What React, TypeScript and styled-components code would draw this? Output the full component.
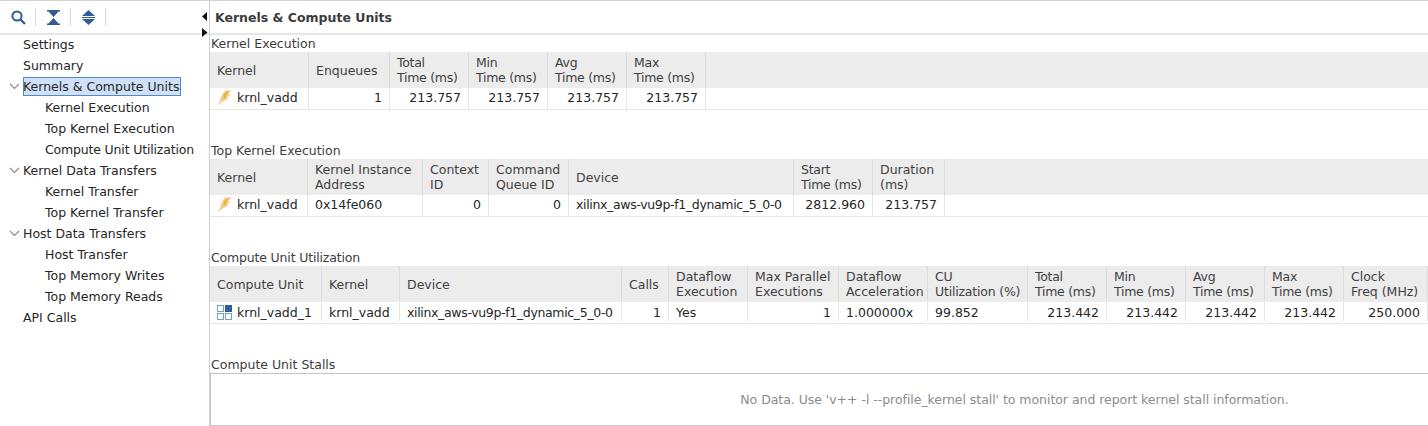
import React from 'react';
import styled, { createGlobalStyle } from 'styled-components';

const GlobalStyles = createGlobalStyle`
  html, body { margin: 0; padding: 0; background: #fff; }
  body { font-family: "DejaVu Sans", sans-serif; font-size: 12.5px; color: #262626; }
`;

const Wrapper = styled.div`
  width: 1428px;
  height: 426px;
  display: flex;
  overflow: hidden;
  background: #fff;
`;

const Sidebar = styled.aside`
  width: 210px;
  box-sizing: border-box;
  flex: none;
  border-right: 1px solid #cfcfcf;
`;

const Toolbar = styled.div`
  height: 35px;
  margin-bottom: -1px;
  padding-left: 1px;
  box-sizing: border-box;
  display: flex;
  align-items: center;
  border-top: 1px solid #d4d4d4;
  border-bottom: 2px solid #e6e6e6;
`;

const ToolButton = styled.div`
  width: 35px;
  height: 18px;
  box-sizing: border-box;
  flex: none;
  display: flex;
  align-items: center;
  justify-content: center;
  border-right: 1px solid #d8d8d8;
  svg { display: block; }
`;

const TreeRow = styled.div<{ $level: number }>`
  height: 21px;
  display: flex;
  align-items: center;
  padding-left: ${p => (p.$level === 1 ? 45 : 23)}px;
  position: relative;
  white-space: nowrap;
`;

const Chevron = styled.svg`
  position: absolute;
  left: 9px;
  top: 7px;
`;

const TreeLabel = styled.span<{ $selected?: boolean; $spacing?: number }>`
  line-height: 19px;
  height: 19px;
  letter-spacing: ${p => p.$spacing ?? 0}px;
  ${p => (p.$selected
    ? 'background: #cfe0f8; outline: 1px solid #4d8cc7; outline-offset: -1px; padding-right: 2px;'
    : '')}
`;

const Main = styled.main`
  flex: 1;
  min-width: 0;
  display: flex;
  flex-direction: column;
  position: relative;
`;

const Header = styled.header`
  height: 35px;
  flex: none;
  box-sizing: border-box;
  display: flex;
  align-items: center;
  padding-left: 5px;
  font-weight: bold;
  color: #3c3c3c;
  border-top: 1px solid #d4d4d4;
  border-bottom: 2px solid #e6e6e6;
`;

const Arrows = styled.svg`
  position: absolute;
  left: -8px;
  top: 12px;
`;

const Section = styled.section`
  height: 107px;
  flex: none;
`;

const SectionTitle = styled.div<{ $spacing?: number }>`
  height: 17px;
  line-height: 18px;
  padding-left: 1px;
  color: #3c3c3c;
  letter-spacing: ${p => p.$spacing ?? 0}px;
`;

const TableRow = styled.div<{ $cols: string; $head?: boolean }>`
  display: grid;
  grid-template-columns: ${p => p.$cols};
  height: ${p => (p.$head ? 36 : 22)}px;
  box-sizing: border-box;
  background: ${p => (p.$head ? '#ececec' : '#fff')};
  ${p => (p.$head ? '' : 'border-bottom: 1px solid #e6e6e6;')}
`;

const HeadCell = styled.div<{ $low?: boolean; $spacing?: number }>`
  box-sizing: border-box;
  display: flex;
  align-items: center;
  padding: ${p => (p.$low ? 2 : 0)}px 0 0 7px;
  line-height: 15px;
  color: #3f3f3f;
  border-right: 1px solid #dcdcdc;
  white-space: pre;
  overflow: hidden;
  letter-spacing: ${p => p.$spacing ?? 0}px;
`;

const Cell = styled.div<{ $num?: boolean; $spacing?: number; $low?: boolean }>`
  box-sizing: border-box;
  display: flex;
  align-items: center;
  justify-content: ${p => (p.$num ? 'flex-end' : 'flex-start')};
  padding: ${p => (p.$low ? '2px 7px 0' : '0 7px 2px')};
  gap: 5px;
  border-right: 1px solid #e6e6e6;
  white-space: nowrap;
  letter-spacing: ${p => p.$spacing ?? 0}px;
`;

const IconSlot = styled.span`
  display: flex;
  flex: none;
`;

const Filler = styled.div``;

const EmptyBox = styled.div`
  height: 53px;
  box-sizing: border-box;
  display: flex;
  align-items: center;
  justify-content: center;
  padding-left: 390px;
  color: #8c8c8c;
  letter-spacing: -0.04px;
  border: 1px solid #c4c4c4;
  border-right: none;
`;

const Bolt = () => (
  <svg width="15" height="15" viewBox="0 0 15 15">
    <path d="M8 1 L14 0.5 L10.5 4.5 L13 4.5 L9.5 8 L11 8 L1 14.5 L4.5 9 L3 9 L5.5 5.5 L5 5 Z" fill="#f5cd7c" stroke="#e4d6b4" strokeWidth="0.7" />
    <path d="M9 2 L12 1.5 L8 6.5 L10 6.5 L6 9.5 L7 7.5 L6.5 5 Z" fill="#f0ab3a" />
  </svg>
);

const UnitIcon = () => (
  <svg width="15" height="15" viewBox="0 0 15 15">
    <rect x="0.5" y="0.5" width="6" height="6" fill="none" stroke="#6f9fd0" />
    <rect x="8" y="0" width="7" height="7" fill="#2f5f96" />
    <rect x="0.5" y="8.5" width="6" height="6" fill="none" stroke="#6f9fd0" />
    <rect x="8.5" y="8.5" width="6" height="6" fill="none" stroke="#6f9fd0" />
  </svg>
);

const navy = '#2f5d94';

const tree: { label: string; level: number; open?: boolean; selected?: boolean; spacing?: number }[] = [
  { label: 'Settings', level: 0 },
  { label: 'Summary', level: 0 },
  { label: 'Kernels & Compute Units', level: 0, open: true, selected: true },
  { label: 'Kernel Execution', level: 1 },
  { label: 'Top Kernel Execution', level: 1 },
  { label: 'Compute Unit Utilization', level: 1, spacing: -0.17 },
  { label: 'Kernel Data Transfers', level: 0, open: true },
  { label: 'Kernel Transfer', level: 1 },
  { label: 'Top Kernel Transfer', level: 1 },
  { label: 'Host Data Transfers', level: 0, open: true },
  { label: 'Host Transfer', level: 1 },
  { label: 'Top Memory Writes', level: 1 },
  { label: 'Top Memory Reads', level: 1 },
  { label: 'API Calls', level: 0 },
];

type Col = { head: string; value: string; num?: boolean; icon?: React.ReactNode; spacing?: number; headSpacing?: number };

const deviceName = 'xilinx_aws-vu9p-f1_dynamic_5_0-0';
const timeSpacing = -0.28;

const tables: { title: string; spacing?: number; low?: boolean; cols: string; columns: Col[] }[] = [
  {
    title: 'Kernel Execution',
    cols: '99px 81px 79px 79px 79px 79px 1fr',
    columns: [
      { head: 'Kernel', value: 'krnl_vadd', icon: <Bolt /> },
      { head: 'Enqueues', value: '1', num: true },
      { head: 'Total\nTime (ms)', value: '213.757', num: true, headSpacing: timeSpacing },
      { head: 'Min\nTime (ms)', value: '213.757', num: true, headSpacing: timeSpacing },
      { head: 'Avg\nTime (ms)', value: '213.757', num: true, headSpacing: timeSpacing },
      { head: 'Max\nTime (ms)', value: '213.757', num: true, headSpacing: timeSpacing },
    ],
  },
  {
    title: 'Top Kernel Execution',
    cols: '98px 115px 66px 80px 225px 79px 72px 1fr',
    columns: [
      { head: 'Kernel', value: 'krnl_vadd', icon: <Bolt /> },
      { head: 'Kernel Instance\nAddress', value: '0x14fe060' },
      { head: 'Context\nID', value: '0', num: true },
      { head: 'Command\nQueue ID', value: '0', num: true },
      { head: 'Device', value: deviceName, spacing: -0.34 },
      { head: 'Start\nTime (ms)', value: '2812.960', num: true, headSpacing: timeSpacing },
      { head: 'Duration\n(ms)', value: '213.757', num: true },
    ],
  },
  {
    title: 'Compute Unit Utilization',
    spacing: -0.17,
    low: true,
    cols: '112px 78px 222px 47px 79px 91px 89px 100px 79px 79px 79px 79px 1fr',
    columns: [
      { head: 'Compute Unit', value: 'krnl_vadd_1', icon: <UnitIcon /> },
      { head: 'Kernel', value: 'krnl_vadd' },
      { head: 'Device', value: deviceName, spacing: -0.34 },
      { head: 'Calls', value: '1', num: true },
      { head: 'Dataflow\nExecution', value: 'Yes' },
      { head: 'Max Parallel\nExecutions', value: '1', num: true },
      { head: 'Dataflow\nAcceleration', value: '1.000000x' },
      { head: 'CU\nUtilization (%)', value: '99.852', headSpacing: -0.2 },
      { head: 'Total\nTime (ms)', value: '213.442', num: true, headSpacing: timeSpacing },
      { head: 'Min\nTime (ms)', value: '213.442', num: true, headSpacing: timeSpacing },
      { head: 'Avg\nTime (ms)', value: '213.442', num: true, headSpacing: timeSpacing },
      { head: 'Max\nTime (ms)', value: '213.442', num: true, headSpacing: timeSpacing },
      { head: 'Clock\nFreq (MHz)', value: '250.000', num: true },
    ],
  },
];

export default function App() {
  return (
    <Wrapper>
      <GlobalStyles />
      <Sidebar>
        <Toolbar>
          <ToolButton>
            <svg width="15" height="15" viewBox="0 0 15 15">
              <circle cx="6" cy="6" r="4.6" fill="none" stroke={navy} strokeWidth="2" />
              <path d="M9.5 9.5 L14 14" stroke={navy} strokeWidth="2.4" />
            </svg>
          </ToolButton>
          <ToolButton>
            <svg width="13" height="15" viewBox="0 0 13 15">
              <path d="M0 0 H13 V1.5 H11.5 L6.5 7 L1.5 1.5 H0 Z M0 15 H13 V13.5 H11.5 L6.5 8 L1.5 13.5 H0 Z" fill={navy} />
            </svg>
          </ToolButton>
          <ToolButton>
            <svg width="13" height="15" viewBox="0 0 13 15">
              <path d="M6.5 0 L13 6 H0 Z M6.5 15 L13 9 H0 Z" fill={navy} />
              <rect x="0" y="7" width="13" height="1" fill={navy} />
            </svg>
          </ToolButton>
        </Toolbar>
        {tree.map(item => (
          <TreeRow key={item.label} $level={item.level}>
            {item.open && (
              <Chevron width="11" height="7" viewBox="0 0 11 7">
                <path d="M1 1 L5.5 5.5 L10 1" fill="none" stroke="#8a8a8a" strokeWidth="1.1" />
              </Chevron>
            )}
            <TreeLabel $selected={item.selected} $spacing={item.spacing}>{item.label}</TreeLabel>
          </TreeRow>
        ))}
      </Sidebar>
      <Main>
        <Header>Kernels &amp; Compute Units</Header>
        <Arrows width="6" height="25" viewBox="0 0 6 25">
          <path d="M5 0 V9 L0 4.5 Z M0 16 V25 L5.5 20.5 Z" fill="#111" />
        </Arrows>
        {tables.map(t => (
          <Section key={t.title}>
            <SectionTitle $spacing={t.spacing}>{t.title}</SectionTitle>
            <TableRow $cols={t.cols} $head>
              {t.columns.map(c => (
                <HeadCell key={c.head} $low={t.low} $spacing={c.headSpacing}>{c.head}</HeadCell>
              ))}
              <Filler />
            </TableRow>
            <TableRow $cols={t.cols}>
              {t.columns.map(c => (
                <Cell key={c.head} $num={c.num} $spacing={c.spacing} $low={t.low}>
                  {c.icon && <IconSlot>{c.icon}</IconSlot>}
                  <span>{c.value}</span>
                </Cell>
              ))}
              <Filler />
            </TableRow>
          </Section>
        ))}
        <SectionTitle>Compute Unit Stalls</SectionTitle>
        <EmptyBox>No Data. Use 'v++ -l --profile_kernel stall' to monitor and report kernel stall information.</EmptyBox>
      </Main>
    </Wrapper>
  );
}
